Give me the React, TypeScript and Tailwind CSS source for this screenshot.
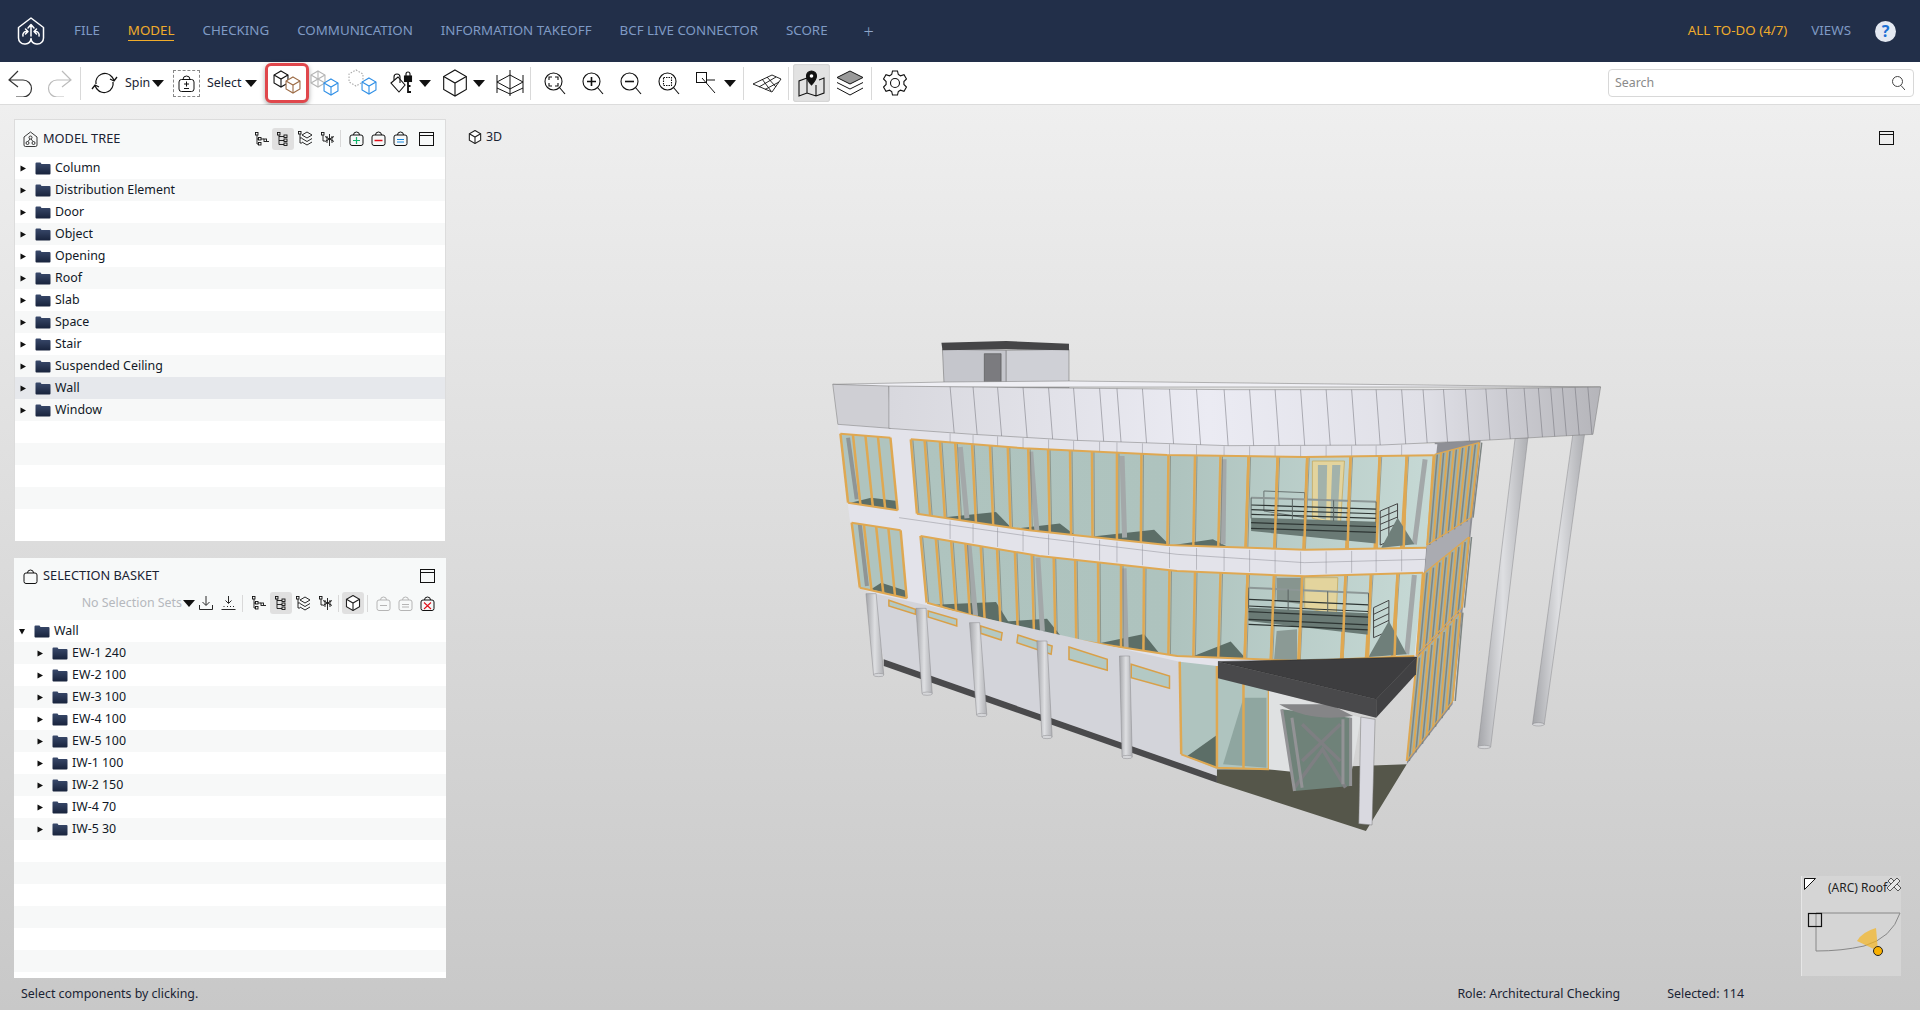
import React from "react";

type Pt = [number, number];

const FOLDERS = ["Column", "Distribution Element", "Door", "Object", "Opening", "Roof", "Slab", "Space", "Stair", "Suspended Ceiling", "Wall", "Window"];
const WALLS = ["EW-1 240", "EW-2 100", "EW-3 100", "EW-4 100", "EW-5 100", "IW-1 100", "IW-2 150", "IW-4 70", "IW-5 30"];

function Caret({ className = "" }: { className?: string }) {
  return (
    <svg width="12" height="7" viewBox="0 0 12 7" className={className}>
      <path d="M0 0h12L6 7z" fill="#111" />
    </svg>
  );
}

function Divider({ className = "" }: { className?: string }) {
  return <div className={`w-px h-[33px] bg-[#d9d9d9] ${className}`} />;
}

// iso cube centred on cx, cy
function Cube({ cx, cy, r, stroke, dash, wire, hexOnly }: { cx: number; cy: number; r: number; stroke: string; dash?: string; wire?: boolean; hexOnly?: boolean }) {
  const h = r * 0.87;
  const hex = `M${cx} ${cy - r}L${cx + h} ${cy - r / 2}V${cy + r / 2}L${cx} ${cy + r}L${cx - h} ${cy + r / 2}V${cy - r / 2}Z`;
  const inner = `M${cx - h} ${cy - r / 2}L${cx} ${cy}L${cx + h} ${cy - r / 2}M${cx} ${cy}V${cy + r}`;
  const back = `M${cx - h} ${cy + r / 2}L${cx} ${cy}M${cx + h} ${cy + r / 2}L${cx} ${cy}M${cx} ${cy - r}V${cy}`;
  return (
    <g fill="none" stroke={stroke} strokeWidth="1.1" strokeDasharray={dash}>
      <path d={hex} fill="#fff" />
      {!hexOnly && <path d={inner} />}
      {wire && <path d={back} />}
    </g>
  );
}

function Logo() {
  return (
    <svg width="28" height="28" viewBox="0 0 28 28" fill="none" stroke="#fff" strokeWidth="1.5" strokeLinejoin="round" strokeLinecap="round">
      <path d="M1.500 10.500L14 1l12.500 9.500V21a6 6 0 0 1-6 6h-1A5.500 5.500 0 0 1 14 21.500 5.500 5.500 0 0 1 8.500 27h-1a6 6 0 0 1-6-6z" />
      <path d="M14 19V8M11 11l3-3.500 3 3.500" />
      <path d="M6 19a3.500 3.500 0 0 1 3-4.500h1.500M8.500 12l2.500 2.500L8.500 17" />
      <path d="M22 19a3.500 3.500 0 0 0-3-4.500h-1.500M19.500 12L17 14.500l2.500 2.500" />
    </svg>
  );
}

function Undo({ flip, color }: { flip?: boolean; color: string }) {
  return (
    <svg width="26" height="27" viewBox="0 0 26 27" fill="none" stroke={color} strokeWidth="1.2" className={flip ? "-scale-x-100" : ""}>
      <path d="M1 10h14a8.500 8.500 0 0 1 0 17h-7M10 1L1 10l9 7" />
    </svg>
  );
}

function SpinIcon() {
  return (
    <svg width="27" height="24" viewBox="0 0 27 24" fill="none" stroke="#111" strokeWidth="1.3">
      <path d="M5 13a9 9 0 0 1 16-7l2 3M26 6l-3 4-4-2" />
      <path d="M22 11a9 9 0 0 1-16 7l-2-3M1 18l3-4 4 2" />
    </svg>
  );
}

function Bag({ sign, color = "#111", size = 15 }: { sign?: string; color?: string; size?: number }) {
  return (
    <svg width={size} height={size} viewBox="0 0 15 15" fill="none" stroke={color} strokeWidth="1">
      <rect x="1" y="4" width="13" height="10.500" rx="2" />
      <path d="M4.500 4a3 3 0 0 1 6 0" />
      {sign === "plus" && <path d="M4 9.500h7M7.500 6v7" stroke="#13b36b" strokeWidth="1.200" />}
      {sign === "minus" && <path d="M3.500 9.500h8" stroke="#e0101a" strokeWidth="1.500" />}
      {sign === "equal" && <path d="M4 8.500h7M4 11h7" stroke="#1687e0" strokeWidth="1.200" />}
      {sign === "grayMinus" && <path d="M4 9.500h7" stroke={color} />}
      {sign === "grayEqual" && <path d="M4 8.500h7M4 11h7" stroke={color} />}
      {sign === "cross" && <path d="M4 6.500l7 6.500M11 6.500L4 13" stroke="#e0101a" strokeWidth="1.100" />}
    </svg>
  );
}

function WindowIcon() {
  return (
    <svg width="15" height="14" viewBox="0 0 15 14" fill="none" stroke="#111" strokeWidth="1">
      <rect x="0.500" y="0.500" width="14" height="13" />
      <path d="M0.500 3.500h14" />
    </svg>
  );
}

function TreeFlat() {
  return (
    <svg width="14" height="14" viewBox="0 0 14 14" fill="none" stroke="#111" strokeWidth="0.900">
      <rect x="0.500" y="0.500" width="2.500" height="2.500" />
      <rect x="3.500" y="5.500" width="2.500" height="2.500" />
      <rect x="3.500" y="10.500" width="2.500" height="2.500" />
      <rect x="9" y="7" width="2.500" height="2.500" />
      <path d="M2 3v9h1.500M2 7h1.500M6 7h3M11.500 9.500H14" />
    </svg>
  );
}

function TreeList() {
  return (
    <svg width="12" height="14" viewBox="0 0 12 14" fill="none" stroke="#111" strokeWidth="0.900">
      <rect x="0.500" y="0.500" width="2.500" height="2.500" />
      <rect x="7" y="3" width="3" height="2.500" />
      <rect x="7" y="7" width="3" height="2.500" />
      <rect x="7" y="11" width="3" height="2.500" />
      <path d="M2 3v9.500h5M2 4.500h5M2 8.500h5" />
    </svg>
  );
}

function TreeLayers() {
  return (
    <svg width="15" height="15" viewBox="0 0 15 15" fill="none" stroke="#111" strokeWidth="0.900">
      <rect x="0.500" y="0.500" width="2.500" height="2.500" />
      <path d="M2 3v9h2M2 7h2" />
      <path d="M4 4l5-3 5 3-5 3zM4 7.500l5 3 5-3M4 11l5 3 5-3" />
    </svg>
  );
}

function TreeSplit() {
  return (
    <svg width="14" height="14" viewBox="0 0 14 14" fill="none" stroke="#111" strokeWidth="0.900">
      <rect x="0.500" y="0.500" width="2.500" height="2.500" />
      <path d="M2 3v6h2M4 4.500l4.500 2.500 4.500-2.500M4 9.500l4.500-2.500 4.500 2.500M8.500 2v12M6 4v7M11 4v7" />
    </svg>
  );
}

function Magnifier({ children }: { children?: React.ReactNode }) {
  return (
    <svg width="22" height="23" viewBox="0 0 22 23" fill="none" stroke="#111" strokeWidth="1.100">
      <circle cx="9.500" cy="9.500" r="8.500" />
      <path d="M15.500 15.500L21 22" />
      {children}
    </svg>
  );
}

function Row({ label, level = 0, open, index, active }: { label: string; level?: number; open?: boolean; index: number; active?: boolean }) {
  const bg = active ? "bg-[#e6e8ec]" : index % 2 ? "bg-[#f7f8f8]" : "bg-white";
  return (
    <div className={`h-[22px] flex items-center shrink-0 ${bg} ${level ? "pl-[23px]" : "pl-[5px]"}`}>
      <svg width="6" height="7" viewBox="0 0 6 7" className="shrink-0">
        {open ? <path d="M0 1h6L3 6.500z" fill="#111" /> : <path d="M0.500 0.500L6 3.500 0.500 6.500z" fill="#111" />}
      </svg>
      <svg width="16" height="13" viewBox="0 0 16 13" className="ml-[9px] shrink-0">
        <defs>
          <linearGradient id="fld" x1="0" y1="0" x2="0" y2="1">
            <stop offset="0" stopColor="#3a4a6c" />
            <stop offset="1" stopColor="#18233c" />
          </linearGradient>
        </defs>
        <path d="M0.500 1.500Q0.500 0.500 1.500 0.500H5.500L6.500 2H14.500Q15.500 2 15.500 3V11.500Q15.500 12.500 14.500 12.500H1.500Q0.500 12.500 0.500 11.500Z" fill="url(#fld)" />
      </svg>
      <span className="ml-[4px] text-[12.4px] text-[#111827] leading-none">{label}</span>
    </div>
  );
}

function Filler({ start, count }: { start: number; count: number }) {
  return (
    <>
      {Array.from({ length: count }, (_, i) => (
        <div key={i} className={`h-[22px] shrink-0 ${(start + i) % 2 ? "bg-[#f7f8f8]" : "bg-white"}`} />
      ))}
    </>
  );
}

// ---- 3D model helpers. coordinates are stretched to fit the viewport box

function yAt(c: Pt[], x: number): number {
  for (let i = 0; i < c.length - 1; i++) {
    const [x0, y0] = c[i];
    const [x1, y1] = c[i + 1];
    if (x <= x1) return y0 + ((x - x0) / (x1 - x0)) * (y1 - y0);
  }
  return c[c.length - 1][1];
}

function pts(list: Pt[]): string {
  return list.map((p) => p.join(",")).join(" ");
}

const BAND_TOP: Pt[] = [[135, 195], [400, 200], [800, 206], [1200, 206], [1530, 198]];
const BAND_BOTTOM: Pt[] = [[135, 322], [300, 340], [500, 358], [800, 374], [1100, 372], [1300, 358], [1515, 340]];

const UP_TOP: Pt[] = [[178, 355], [400, 382], [680, 402], [950, 408], [1203, 403]];
const UP_BOT: Pt[] = [[190, 578], [410, 628], [680, 672], [950, 686], [1188, 680]];
const LO_TOP: Pt[] = [[197, 645], [430, 705], [700, 750], [950, 766], [1182, 755]];
const LO_BOT: Pt[] = [[210, 845], [430, 940], [700, 1005], [950, 1020], [1165, 1005]];

const UP_X = [178, 205, 235, 265, 298, 333, 368, 408, 447, 490, 533, 582, 630, 683, 735, 785, 840, 897, 955, 1040, 1097, 1150, 1203];
const LO_X = [197, 227, 257, 285, 315, 347, 382, 415, 458, 500, 545, 590, 635, 685, 735, 785, 838, 890, 945, 1030, 1080, 1132, 1182];

const PANEL_X = [255, 300, 348, 398, 448, 497, 548, 582, 632, 685, 738, 792, 842, 892, 942, 992, 1042, 1090, 1140, 1182, 1222, 1265, 1305, 1345, 1380, 1408, 1432, 1455, 1480, 1505];

function GlassBand({ top, bot, xs, wedges, pillars }: { top: Pt[]; bot: Pt[]; xs: number[]; wedges: number[][]; pillars: number[][] }) {
  const n = xs.length - 1;
  const botX = (i: number) => xs[i] + 12 - (24 * i) / n;
  const outline: Pt[] = [...top, ...[...bot].reverse()];
  return (
    <g>
      <polygon points={pts(outline)} fill="url(#glass)" />
      {wedges.map(([a, b, h], i) => (
        <polygon key={i} points={pts([[a, yAt(bot, a)], [b, yAt(bot, b) - h], [b + 30, yAt(bot, b + 30)]])} fill="#5c6e67" />
      ))}
      {pillars.map(([x0, y0, x1, y1], i) => (
        <line key={i} x1={x0} y1={y0} x2={x1} y2={y1} stroke="#a3a8a9" strokeWidth="5" />
      ))}
      {xs.map((x, i) => (
        <g key={i}>
          <line x1={x} y1={yAt(top, x)} x2={botX(i)} y2={yAt(bot, botX(i))} stroke="#dfa852" strokeWidth="2.500" />
          <line x1={x + 4} y1={yAt(top, x)} x2={botX(i) + 4} y2={yAt(bot, botX(i))} stroke="#6c6a5c" strokeWidth="0.500" />
        </g>
      ))}
      <polyline points={pts(top)} fill="none" stroke="#dfa852" strokeWidth="2" />
      <polyline points={pts(bot)} fill="none" stroke="#dfa852" strokeWidth="2" />
    </g>
  );
}

function SideGlass({ a, b, c, d, count }: { a: Pt; b: Pt; c: Pt; d: Pt; count: number }) {
  const lines = Array.from({ length: count + 1 }, (_, i) => {
    const t = i / count;
    return [a[0] + (b[0] - a[0]) * t, a[1] + (b[1] - a[1]) * t, d[0] + (c[0] - d[0]) * t, d[1] + (c[1] - d[1]) * t];
  });
  return (
    <g>
      <polygon points={pts([a, b, c, d])} fill="#9fb2ad" />
      {lines.map(([x0, y0, x1, y1], i) => (
        <g key={i}>
          <line x1={x0} y1={y0} x2={x1} y2={y1} stroke="#dfa852" strokeWidth="2" />
          <line x1={x0 + 5} y1={y0} x2={x1 + 5} y2={y1} stroke="#7d8583" strokeWidth="1.500" />
        </g>
      ))}
      <polyline points={pts([a, b])} fill="none" stroke="#dfa852" strokeWidth="1.200" />
      <polyline points={pts([d, c])} fill="none" stroke="#dfa852" strokeWidth="1.200" />
    </g>
  );
}

function Column({ x0, y0, x1, y1, w }: { x0: number; y0: number; x1: number; y1: number; w: number }) {
  return (
    <g>
      <polygon points={pts([[x0 - w / 2, y0], [x0 + w / 2, y0], [x1 + w / 2, y1], [x1 - w / 2, y1]])} fill="url(#col)" stroke="#8a8b8f" strokeWidth="0.500" />
      <ellipse cx={x1} cy={y1} rx={w / 2} ry="5" fill="#d5d6d9" stroke="#8a8b8f" strokeWidth="0.500" />
    </g>
  );
}

function Gallery({ x0, x1, y0, slope, rails }: { x0: number; x1: number; y0: number; slope: number; rails: number[] }) {
  const y = (x: number, dy: number) => y0 + (x - x0) * slope + dy;
  return (
    <g>
      <polygon points={pts([[x0, y(x0, 60)], [x1, y(x1, 60)], [x1, y(x1, 125)], [x0, y(x0, 100)]])} fill="#6a7a75" />
      {rails.map((r, i) => (
        <line key={i} x1={x0} y1={y(x0, r)} x2={x1} y2={y(x1, r)} stroke={r < 10 ? "#8d9796" : "#2d3533"} strokeWidth={r < 10 ? 2 : 1.200} />
      ))}
      {[0, 0.33, 0.66, 1].map((t, i) => {
        const x = x0 + (x1 - x0) * t;
        return <line key={i} x1={x} y1={y(x, 0)} x2={x} y2={y(x, 62)} stroke="#5a6462" strokeWidth="1" />;
      })}
    </g>
  );
}

function Building() {
  return (
    <svg viewBox="0 0 1568 1560" preserveAspectRatio="none" className="absolute left-[820px] top-[216px] w-[800px] h-[520px] [&_*]:[vector-effect:non-scaling-stroke]">
      <defs>
        <linearGradient id="glass" x1="0" y1="0" x2="1" y2="0">
          <stop offset="0" stopColor="#afc4bf" />
          <stop offset="0.5" stopColor="#aec3be" />
          <stop offset="1" stopColor="#c6d9d5" />
        </linearGradient>
        <linearGradient id="fascia" x1="0" y1="0" x2="1" y2="0">
          <stop offset="0" stopColor="#d8d8de" />
          <stop offset="0.45" stopColor="#ebebf3" />
          <stop offset="0.75" stopColor="#e0e0e7" />
          <stop offset="1" stopColor="#b5b5ba" />
        </linearGradient>
        <linearGradient id="col" x1="0" y1="0" x2="1" y2="0">
          <stop offset="0" stopColor="#a4a5a9" />
          <stop offset="0.5" stopColor="#dedfe2" />
          <stop offset="1" stopColor="#aeafb3" />
        </linearGradient>
      </defs>

      {/* far columns */}
      <Column x0={1375} y0={350} x1={1302} y1={1278} w={25} />
      <Column x0={1487} y0={340} x1={1408} y1={1210} w={23} />

      {/* penthouse */}
      <polygon points="240,85 365,88 365,200 243,185" fill="#c5c6cc" stroke="#666" strokeWidth="0.500" />
      <polygon points="365,88 488,85 488,200 365,200" fill="#cfd0d6" stroke="#666" strokeWidth="0.500" />
      <polygon points="238,65 365,60 488,68 488,88 365,85 240,88" fill="#454547" />
      <polygon points="322,98 355,98 355,197 322,193" fill="#7b7b7f" stroke="#444" strokeWidth="0.500" />

      {/* roof edge */}
      <polygon points="25,190 245,183 490,180 1530,198 135,198" fill="#efeff4" stroke="#777" strokeWidth="0.500" />

      {/* right body */}
      <polygon points="1205,365 1295,358 1240,1150 1150,1330 1170,1010" fill="#8e8f95" />
      {/* main body */}
      <polygon points="35,310 1210,370 1188,680 1170,1010 780,1022 778,1365 125,1015 100,815 75,800" fill="#e3e3ea" />

      {/* left piers and glazing */}
      <polygon points="40,338 138,350 152,568 55,545" fill="#afc4bf" />
      <polygon points="62,605 158,628 170,832 78,800" fill="#afc4bf" />
      <polygon points="100,530 152,540 152,568 60,545" fill="#5c6e67" />
      <polygon points="120,785 170,810 170,832 100,805" fill="#5c6e67" />
      <line x1="55" y1="350" x2="72" y2="535" stroke="#8f9596" strokeWidth="4" />
      <line x1="78" y1="610" x2="92" y2="795" stroke="#8f9596" strokeWidth="4" />
      {[0, 1, 2, 3, 4].map((i) => {
        const t = i / 4;
        return (
          <g key={i}>
            <line x1={40 + 98 * t} y1={338 + 12 * t} x2={55 + 97 * t} y2={545 + 23 * t} stroke="#dfa852" strokeWidth="2.500" />
            <line x1={62 + 96 * t} y1={605 + 23 * t} x2={78 + 92 * t} y2={800 + 32 * t} stroke="#dfa852" strokeWidth="2.500" />
          </g>
        );
      })}
      <polyline points="40,338 138,350" fill="none" stroke="#dfa852" strokeWidth="2" />
      <polyline points="55,545 152,568" fill="none" stroke="#dfa852" strokeWidth="2" />
      <polyline points="62,605 158,628" fill="none" stroke="#dfa852" strokeWidth="2" />
      <polyline points="78,800 170,832" fill="none" stroke="#dfa852" strokeWidth="2" />

      <GlassBand
        top={UP_TOP}
        bot={UP_BOT}
        xs={UP_X}
        wedges={[[240, 345, 40], [385, 470, 30], [530, 655, 42], [690, 770, 22]]}
        pillars={[[275, 378, 288, 592], [413, 392, 425, 628], [592, 405, 597, 650], [792, 415, 790, 670], [1186, 415, 1165, 670]]}
      />
      <GlassBand
        top={LO_TOP}
        bot={LO_BOT}
        xs={LO_X}
        wedges={[[225, 345, 60], [345, 445, 50], [545, 635, 50], [730, 805, 50]]}
        pillars={[[292, 672, 305, 885], [427, 710, 436, 930], [596, 742, 600, 980], [1165, 762, 1150, 1000]]}
      />

      {/* door and gallery, upper */}
      <polygon points="965,420 1028,420 1020,612 965,592" fill="#e3d49d" stroke="#c4a961" strokeWidth="0.800" />
      <polygon points="976,432 994,432 992,596 976,590" fill="#a2b2ab" />
      <polygon points="1004,432 1020,432 1014,602 1000,598" fill="#a2b2ab" />
      <polygon points="870,510 950,515 950,590 870,570" fill="none" stroke="#6a7472" strokeWidth="1" />
      <Gallery x0={845} x1={1090} y0={530} slope={0.05} rails={[0, 22, 36, 50, 75, 92]} />
      <polygon points="1098,570 1132,548 1132,650 1098,672" fill="none" stroke="#444" strokeWidth="1" />
      <path d="M1098 590L1132 568M1098 610L1132 588M1098 630L1132 608M1115 560V660" stroke="#444" strokeWidth="1" fill="none" />
      <polygon points="1132,590 1165,670 1100,680" fill="#6f7f7a" />
      {/* door and gallery, lower */}
      <polygon points="950,770 1015,770 1012,882 950,860" fill="#e3d49d" stroke="#c4a961" strokeWidth="0.800" />
      <polygon points="895,770 945,770 945,850 895,840" fill="#87958f" />
      <Gallery x0={840} x1={1075} y0={800} slope={0.07} rails={[0, 35, 55, 72, 95, 110]} />
      <polygon points="1085,860 1115,838 1115,930 1085,950" fill="none" stroke="#444" strokeWidth="1" />
      <path d="M1085 880L1115 858M1085 900L1115 878M1085 920L1115 898" stroke="#444" strokeWidth="1" fill="none" />
      <polygon points="1115,900 1150,1000 1075,1008" fill="#6f7f7a" />
      <polygon points="895,930 935,925 935,1015 890,1015" fill="#8b9a95" />

      {/* redraw mullions over interior */}
      {[16, 17, 18, 19, 20, 21].map((i) => {
        const x = UP_X[i];
        const bx = x - 6;
        const lx = LO_X[i];
        const lb = lx - 6;
        return (
          <g key={i}>
            <line x1={x} y1={yAt(UP_TOP, x)} x2={bx} y2={yAt(UP_BOT, bx)} stroke="#dfa852" strokeWidth="2.500" />
            <line x1={lx} y1={yAt(LO_TOP, lx)} x2={lb} y2={yAt(LO_BOT, lb)} stroke="#dfa852" strokeWidth="2.500" />
          </g>
        );
      })}

      {/* spandrel joints */}
      {PANEL_X.filter((x) => x < 1180).map((x, i) => (
        <g key={i} stroke="#8f8f97" strokeWidth="0.500">
          <line x1={x} y1={yAt(UP_BOT, x) + 6} x2={x} y2={yAt(LO_TOP, x) - 6} />
          <line x1={x} y1={yAt(BAND_BOTTOM, x) + 2} x2={x} y2={yAt(UP_TOP, x) - 2} />
        </g>
      ))}
      <polyline points="155,590 430,650 700,700 950,725 1188,715" fill="none" stroke="#8f8f97" strokeWidth="0.500" />

      {/* parapet */}
      <polygon points="25,190 135,195 138,322 35,310" fill="#cfcfd4" stroke="#777" strokeWidth="0.500" />
      <polygon points={pts([...BAND_TOP, ...[...BAND_BOTTOM].reverse()])} fill="url(#fascia)" stroke="#777" strokeWidth="0.500" />
      {PANEL_X.map((x, i) => (
        <line key={i} x1={x} y1={yAt(BAND_TOP, x)} x2={x + 8} y2={yAt(BAND_BOTTOM, x + 8)} stroke="#6d6d74" strokeWidth="0.500" />
      ))}

      {/* side strips */}
      <polygon points="1190,672 1275,590 1272,648 1185,755" fill="#aaabb1" />
      <polygon points="1170,1000 1258,860 1255,875 1168,1008" fill="#aaabb1" />
      <SideGlass a={[1205, 400]} b={[1292, 365]} c={[1275, 590]} d={[1190, 672]} count={7} />
      <SideGlass a={[1185, 755]} b={[1272, 648]} c={[1258, 860]} d={[1170, 1000]} count={7} />
      <SideGlass a={[1170, 1010]} b={[1255, 875]} c={[1240, 1140]} d={[1150, 1320]} count={7} />

      {/* ground wall */}
      <polygon points="100,815 705,1022 708,1300 778,1345 778,1365 125,1015" fill="#d3d4da" />
      <polygon points="125,1015 778,1365 778,1385 125,1035" fill="#4a4a4c" />
      {[[135, 838, 187, 865, 187, 880, 135, 855], [212, 870, 268, 895, 268, 915, 212, 888], [315, 915, 357, 935, 355, 957, 315, 937], [388, 942, 455, 975, 453, 1000, 386, 965], [488, 978, 563, 1015, 563, 1048, 488, 1015], [610, 1030, 685, 1065, 685, 1102, 610, 1070]].map((p, i) => (
        <polygon key={i} points={p.join(" ")} fill="#b3c9c4" stroke="#d9a048" strokeWidth="1.500" />
      ))}
      <Column x0={100} y0={818} x1={115} y1={1062} w={20} />
      <Column x0={198} y0={862} x1={210} y1={1118} w={20} />
      <Column x0={303} y0={905} x1={317} y1={1182} w={20} />
      <Column x0={435} y0={960} x1={445} y1={1248} w={20} />
      <Column x0={597} y0={1005} x1={602} y1={1308} w={20} />

      {/* floor and entrance */}
      <polygon points="778,1345 880,1345 1150,1330 1070,1530 778,1385" fill="#55564a" />
      <polygon points="705,1022 778,1035 880,1105 880,1345 778,1345 708,1300" fill="#afc4bf" />
      <polygon points="720,1305 780,1240 778,1340" fill="#5c6e67" />
      <polygon points="790,1330 830,1130 875,1130 875,1340" fill="#8fa6a0" />
      {[[705, 1022, 708, 1300], [778, 1035, 778, 1340], [830, 1085, 830, 1342], [880, 1105, 880, 1345]].map(([a, b, c, d], i) => (
        <line key={i} x1={a} y1={b} x2={c} y2={d} stroke="#dfa852" strokeWidth="2.500" />
      ))}
      <polyline points="708,1300 778,1340 880,1345" fill="none" stroke="#dfa852" strokeWidth="2" />
      <polygon points="880,1105 1060,1190 1040,1370 880,1345" fill="#dfe1e2" />

      {/* revolving door */}
      <polygon points="905,1165 1040,1190 1040,1395 930,1410" fill="#6f8279" />
      <path d="M900 1150Q960 1205 1045 1185L1000 1150Z" fill="#858587" />
      <path d="M945 1210L1020 1320M1020 1210L945 1320M930 1400L985 1285L1030 1400" fill="none" stroke="#7e7f82" strokeWidth="3.500" />
      <path d="M905 1165L930 1410M925 1190L945 1400M1040 1190V1395M1025 1195V1390" fill="none" stroke="#939396" strokeWidth="3" />

      {/* canopy */}
      <polygon points="780,1022 1170,1008 1090,1135" fill="#3d3d3f" stroke="#222" strokeWidth="0.500" />
      <polygon points="780,1022 1090,1135 1090,1190 780,1072" fill="#49494b" />
      <polygon points="1170,1008 1168,1060 1090,1190 1090,1135" fill="#414143" />
      <polygon points="1060,1188 1088,1195 1082,1512 1056,1508" fill="#d9d9e0" stroke="#777" strokeWidth="0.500" />
    </svg>
  );
}

function MiniMap() {
  return (
    <div className="absolute left-[1801px] top-[771px] w-[100px] h-[100px] bg-[#d5d5d5] border-l border-[#e6e6e6]">
      <span className="absolute left-[26px] top-[3px] text-[12px] leading-[18px] text-[#222] whitespace-nowrap font-['Noto_Sans',sans-serif]">(ARC) Roof</span>
      <svg width="100" height="100" viewBox="0 0 100 100" className="absolute inset-0">
        <path d="M2.500 2.500H13.500L2.500 13.500Z" fill="#fff" stroke="#111" strokeWidth="1" />
        <path d="M86 5l3-3 10 10-3 3z" fill="#e8e8e8" stroke="#333" strokeWidth="0.800" />
        <path d="M95 2l3 3-10 10-3-3z" fill="#e8e8e8" stroke="#333" strokeWidth="0.800" />
        <path d="M14 37H98Q90 62 62 70Q40 75 14 75Z" fill="none" stroke="#888" strokeWidth="1" />
        <path d="M76 75L55 65Q60 56 74 52Z" fill="#f5b521" fillOpacity="0.7" />
        <rect x="6.500" y="37.500" width="13" height="13" fill="none" stroke="#111" strokeWidth="1.200" />
        <circle cx="76" cy="75" r="4.500" fill="#f9b000" stroke="#222" strokeWidth="1" />
      </svg>
    </div>
  );
}

export default function App() {
  return (
    <div className="w-full h-[1010px] flex flex-col overflow-hidden font-['Noto_Sans',sans-serif]">
      <header className="h-[62px] shrink-0 bg-[#222f49] flex items-center">
        <div className="ml-[17px] w-[57px]">
          <Logo />
        </div>
        <nav className="flex items-center gap-[28px] text-[13.33px] text-[#7f9ac4]">
          <span>FILE</span>
          <span className="text-[#f0ac2b] border-b border-[#f0ac2b] leading-[19px]">MODEL</span>
          <span>CHECKING</span>
          <span>COMMUNICATION</span>
          <span>INFORMATION TAKEOFF</span>
          <span>BCF LIVE CONNECTOR</span>
          <span>SCORE</span>
          <span className="ml-[8px] text-[18px] font-light text-[#8fa6c9] leading-none">+</span>
        </nav>
        <div className="ml-auto flex items-center text-[13.33px] pr-[24px]">
          <span className="text-[#f0ac2b]">ALL TO-DO (4/7)</span>
          <span className="ml-[24px] text-[#7f9ac4]">VIEWS</span>
          <span className="ml-[24px] w-[21px] h-[21px] rounded-full bg-[#e4e9f2] text-[#1a6fd4] font-bold text-[16px] flex items-center justify-center leading-none">?</span>
        </div>
      </header>

      <div className="h-[43px] shrink-0 bg-white border-b border-[#dcdcdc] flex items-center">
        <div className="ml-[8px]"><Undo color="#333" /></div>
        <div className="ml-[12px]"><Undo flip color="#bbb" /></div>
        <Divider className="ml-[8px]" />
        <div className="ml-[10px]"><SpinIcon /></div>
        <span className="ml-[7px] w-[27px] text-[12.4px] text-[#1a2333]">Spin</span>
        <Caret />
        <div className="ml-[9px] w-[27px] h-[27px] border border-dashed border-[#888] flex items-center justify-center">
          <svg width="17" height="17" viewBox="0 0 17 17" fill="none" stroke="#111" strokeWidth="1">
            <rect x="1" y="4.500" width="15" height="12" rx="2.500" />
            <path d="M5 4.500a3.500 3.500 0 0 1 7 0M6 9h5M8.500 6.500v5M6 13.500h5" />
          </svg>
        </div>
        <span className="ml-[7px] w-[38px] text-[12.4px] text-[#1a2333]">Select</span>
        <Caret />
        <div className="ml-[8px] w-[44px] h-[40px] rounded-[6px] border-[3px] border-[#e0474c] shadow-[0_2px_5px_rgba(0,0,0,0.35)] bg-white">
          <svg width="38" height="34" viewBox="0 0 38 34">
            <Cube cx={13} cy={13} r={8} stroke="#111" />
            <Cube cx={25} cy={19} r={8} stroke="#9c6b45" />
          </svg>
        </div>
        <svg width="30" height="30" viewBox="0 0 30 30" className="ml-[1px]">
          <Cube cx={8} cy={11} r={8} stroke="#b5b5b5" wire />
          <Cube cx={21} cy={19} r={8} stroke="#2f8fe6" />
        </svg>
        <svg width="30" height="30" viewBox="0 0 30 30" className="ml-[8px]">
          <Cube cx={8} cy={10} r={8} stroke="#aaa" dash="1.500 1.500" hexOnly />
          <Cube cx={21} cy={18} r={8} stroke="#2f8fe6" />
        </svg>
        <svg width="23" height="24" viewBox="0 0 23 24" fill="none" stroke="#111" strokeWidth="1.100" className="ml-[12px]">
          <path d="M1 12l7-6 7 8-6 7z" fill="#fff" />
          <path d="M4 9V6a3 3 0 0 1 6 0v6" />
          <rect x="14.500" y="5" width="7" height="5.500" fill="#111" />
          <path d="M16 5V3a2 2 0 0 1 4 0v2" />
          <path d="M18 10.500V21h3M18 15h2.500" strokeWidth="1.800" />
        </svg>
        <Caret className="ml-[6px]" />
        <svg width="26" height="28" viewBox="0 0 26 28" className="ml-[11px]">
          <Cube cx={13} cy={14} r={13} stroke="#111" />
        </svg>
        <Caret className="ml-[5px]" />
        <svg width="28" height="28" viewBox="0 0 28 28" fill="none" stroke="#111" strokeWidth="1" className="ml-[11px]">
          <path d="M1 6v18M27 6v18M14 1v26" />
          <path d="M1 13l13-7 13 7-13 7zM1 19l13 6 13-6" />
        </svg>
        <Divider className="ml-[6px]" />
        <div className="ml-[13px]">
          <Magnifier>
            <path d="M5 8V5h3M11 5h3v3M14 11v3h-3M8 14H5v-3" />
          </Magnifier>
        </div>
        <div className="ml-[16px]">
          <Magnifier>
            <path d="M5 9.500h9M9.500 5v9" strokeWidth="1.600" />
          </Magnifier>
        </div>
        <div className="ml-[16px]">
          <Magnifier>
            <path d="M5 9.500h9" strokeWidth="1.600" />
          </Magnifier>
        </div>
        <div className="ml-[16px]">
          <Magnifier>
            <rect x="5.500" y="5.500" width="8" height="8" strokeDasharray="1.500 1" />
          </Magnifier>
        </div>
        <svg width="20" height="22" viewBox="0 0 20 22" fill="none" stroke="#111" strokeWidth="1" className="ml-[16px]">
          <rect x="0.500" y="0.500" width="10" height="10" fill="#fff" />
          <path d="M6 6l13 15M10.500 8H19" />
        </svg>
        <Caret className="ml-[8px]" />
        <Divider className="ml-[7px]" />
        <svg width="30" height="19" viewBox="0 0 30 19" fill="none" stroke="#111" strokeWidth="0.900" className="ml-[8px]">
          <path d="M1 10L20 1l9 4-9 13zM7 13L24 3M13 15.500L27 8M10 5l9 12M15 3l9 10" />
        </svg>
        <Divider className="ml-[6px]" />
        <div className="ml-[4px] w-[37px] h-[38px] rounded-[3px] bg-[#e2e2e2] shadow-[inset_0_0_2px_rgba(0,0,0,0.2)] flex items-center justify-center">
          <svg width="27" height="27" viewBox="0 0 27 27" fill="none" stroke="#111" strokeWidth="1.100">
            <path d="M9 8L1 11v15l8-3 9 3 8-3V8l-5 2M9 8v15M18 15v11" />
            <path d="M13.500 1a5 5 0 0 1 5 5c0 3.500-5 9-5 9s-5-5.500-5-9a5 5 0 0 1 5-5z" fill="#111" />
            <circle cx="13.500" cy="6" r="1.800" fill="#fff" stroke="none" />
          </svg>
        </div>
        <svg width="28" height="27" viewBox="0 0 28 27" fill="none" stroke="#111" strokeWidth="1" className="ml-[6px]">
          <path d="M14 1L27 7.500 14 14 1 7.500z" fill="#9a9a9a" />
          <path d="M1 12.500L14 19l13-6.500M1 18L14 25l13-7" />
        </svg>
        <Divider className="ml-[7px]" />
        <svg width="24" height="26" viewBox="0 0 24 26" fill="none" stroke="#111" strokeWidth="1.100" className="ml-[11px]">
          <circle cx="12" cy="13" r="4.500" />
          <path d="M9.500 1h5l.8 3.500 2.200 1.300L21 4.700l2.500 4.300-2.600 2.500v3L23.500 17 21 21.300l-3.500-1.100-2.200 1.300L14.500 25h-5l-.8-3.500-2.200-1.300L3 21.300.5 17l2.600-2.500v-3L.5 9 3 4.700l3.500 1.100 2.200-1.300z" />
        </svg>
        <div className="ml-auto mr-[6px] w-[306px] h-[28px] rounded-[4px] border border-[#d8d8d8] flex items-center justify-between pl-[6px] pr-[8px]">
          <span className="text-[12.4px] text-[#8a8a8a] pt-px">Search</span>
          <svg width="13" height="14" viewBox="0 0 13 14" fill="none" stroke="#444" strokeWidth="1">
            <circle cx="5.500" cy="5.500" r="5" />
            <path d="M9 9.500L13 14" />
          </svg>
        </div>
      </div>

      <main className="flex-1 flex flex-col relative min-h-0 bg-gradient-to-b from-[#efefef] to-[#c8c8c8]">
        <Building />
        <div className="flex-1 flex min-h-0 relative">
          <aside className="w-[446px] shrink-0 pl-[14px] pt-[14px] flex flex-col gap-[16px]">
            <section className="h-[423px] bg-white border border-[#dcdcdc] flex flex-col overflow-hidden">
              <div className="h-[37px] shrink-0 bg-[#f7f9f9] flex items-center">
                <svg width="15" height="16" viewBox="0 0 15 16" fill="none" stroke="#222" strokeWidth="0.900" className="ml-[8px]">
                  <path d="M1 6L7.500 1 14 6v8a1.500 1.500 0 0 1-1.500 1.500h-10A1.500 1.500 0 0 1 1 14z" />
                  <circle cx="7.500" cy="6.500" r="1.500" />
                  <circle cx="4.500" cy="12" r="1.500" />
                  <circle cx="10.500" cy="12" r="1.500" />
                  <path d="M7 8l-2 2.500M8 8l2 2.500" />
                </svg>
                <span className="ml-[5px] text-[12.8px] text-[#1a2333]">MODEL TREE</span>
                <div className="ml-auto flex items-center">
                  <TreeFlat />
                  <div className="ml-[3px] w-[22px] h-[22px] rounded-[3px] bg-[#e0e0e0] flex items-center justify-center"><TreeList /></div>
                  <div className="ml-[4px]"><TreeLayers /></div>
                  <div className="ml-[8px]"><TreeSplit /></div>
                  <div className="ml-[5px] w-px h-[17px] bg-[#d9d9d9]" />
                  <div className="ml-[8px]"><Bag sign="plus" /></div>
                  <div className="ml-[7px]"><Bag sign="minus" /></div>
                  <div className="ml-[7px]"><Bag sign="equal" /></div>
                  <div className="ml-[11px] mr-[11px]"><WindowIcon /></div>
                </div>
              </div>
              {FOLDERS.map((f, i) => (
                <Row key={f} label={f} index={i} active={f === "Wall"} />
              ))}
              <Filler start={12} count={5} />
            </section>
            <section className="h-[420px] bg-white flex flex-col overflow-hidden">
              <div className="h-[62px] shrink-0 bg-[#f7f9f9] flex flex-col">
                <div className="h-[36px] flex items-center pl-[9px]">
                  <Bag size={15} />
                  <span className="ml-[5px] text-[12.8px] text-[#1a2333]">SELECTION BASKET</span>
                  <div className="ml-auto mr-[11px]"><WindowIcon /></div>
                </div>
                <div className="h-[18px] flex items-center justify-end">
                  <span className="text-[12.4px] text-[#b5b8bd]">No Selection Sets</span>
                  <Caret className="ml-[1px]" />
                  <svg width="14" height="14" viewBox="0 0 14 14" fill="none" stroke="#111" strokeWidth="0.900" className="ml-[4px]">
                    <path d="M7 0v9M3.500 6L7 9.500 10.500 6M0.500 9v4.500h13V9" />
                  </svg>
                  <svg width="15" height="14" viewBox="0 0 15 14" fill="none" stroke="#111" strokeWidth="0.900" className="ml-[8px]">
                    <path d="M7.500 0v7M4.500 4.500L7.500 7.500l3-3M0.500 13.500h14M2.500 10.500h1M6 10.500h1M9 10.500h1M12 10.500h1" />
                  </svg>
                  <div className="ml-[6px] w-px h-[17px] bg-[#d9d9d9]" />
                  <div className="ml-[9px]"><TreeFlat /></div>
                  <div className="ml-[4px] w-[22px] h-[22px] rounded-[3px] bg-[#e0e0e0] flex items-center justify-center shrink-0"><TreeList /></div>
                  <div className="ml-[4px]"><TreeLayers /></div>
                  <div className="ml-[8px]"><TreeSplit /></div>
                  <div className="ml-[5px] w-px h-[17px] bg-[#d9d9d9]" />
                  <div className="ml-[3px] w-[22px] h-[22px] rounded-[3px] bg-[#e0e0e0] flex items-center justify-center shrink-0">
                    <svg width="16" height="16" viewBox="0 0 16 16">
                      <Cube cx={8} cy={8} r={7.500} stroke="#222" />
                    </svg>
                  </div>
                  <div className="ml-[3px] w-px h-[17px] bg-[#d9d9d9]" />
                  <div className="ml-[8px]"><Bag sign="grayMinus" color="#b5b5b5" /></div>
                  <div className="ml-[7px]"><Bag sign="grayEqual" color="#b5b5b5" /></div>
                  <div className="ml-[7px] mr-[11px]"><Bag sign="cross" /></div>
                </div>
              </div>
              <Row label="Wall" open index={0} />
              {WALLS.map((w, i) => (
                <Row key={w} label={w} level={1} index={i + 1} />
              ))}
              <Filler start={10} count={7} />
            </section>
          </aside>
          <div className="flex-1 min-w-0 flex items-start justify-between pl-[22px] pr-[26px] pt-[26px]">
            <div className="flex items-center gap-[4px] -mt-px">
              <svg width="14" height="14" viewBox="0 0 14 14">
                <Cube cx={7} cy={7} r={6.500} stroke="#222" />
              </svg>
              <span className="text-[12.4px] text-[#1a2333] leading-none">3D</span>
            </div>
            <WindowIcon />
          </div>
        </div>
        <MiniMap />
        <footer className="h-[32px] shrink-0 flex items-center text-[12.4px] text-[#1a2333] relative">
          <span className="ml-[21px]">Select components by clicking.</span>
          <span className="ml-auto">Role: Architectural Checking</span>
          <span className="ml-[47px] mr-[176px]">Selected: 114</span>
        </footer>
      </main>
    </div>
  );
}
